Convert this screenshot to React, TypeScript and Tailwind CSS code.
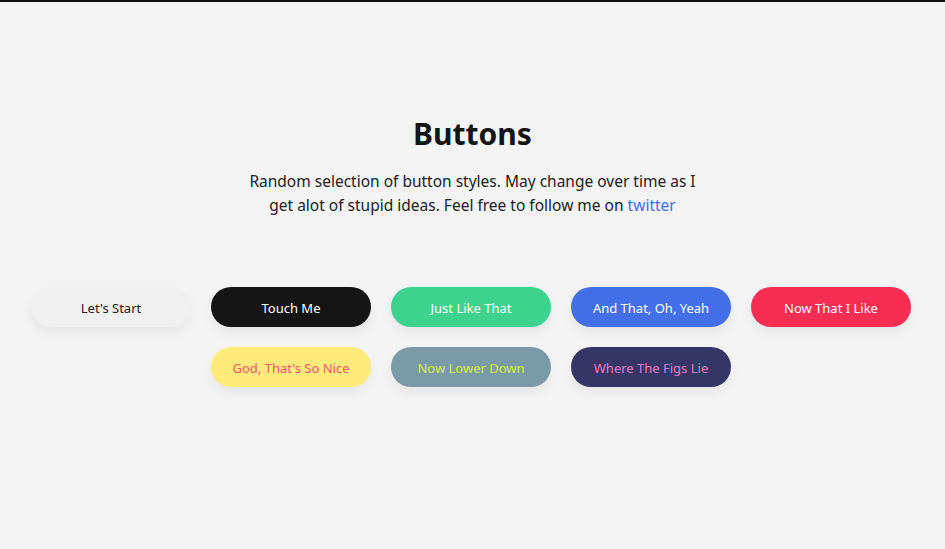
import React from "react";

const buttons = [
  { label: "Let's Start", cls: "bg-[#f0f0f0] text-[#222222] shadow-[0_6px_12px_rgba(0,0,0,0.06)]" },
  { label: "Touch Me", cls: "bg-[#151515] text-white shadow-[0_6px_12px_rgba(0,0,0,0.06)]" },
  { label: "Just Like That", cls: "bg-[#3dd28e] text-white shadow-[0_6px_12px_rgba(0,0,0,0.06)]" },
  { label: "And That, Oh, Yeah", cls: "bg-[#436fe8] text-white shadow-[0_6px_12px_rgba(0,0,0,0.06)]" },
  { label: "Now That I Like", cls: "bg-[#f72d53] text-white shadow-[0_6px_12px_rgba(0,0,0,0.06)]" },
  { label: "God, That's So Nice", cls: "col-start-2 bg-[#feeb7c] text-[#f0586a] shadow-[0_6px_12px_rgba(0,0,0,0.06)]" },
  { label: "Now Lower Down", cls: "bg-[#7a9aa8] text-[#d6f53a] shadow-[0_6px_12px_rgba(0,0,0,0.06)]" },
  { label: "Where The Figs Lie", cls: "bg-[#353566] text-[#f07ac8] shadow-[0_6px_12px_rgba(0,0,0,0.06)]" },
];

export default function App() {
  return (
    <div
      className="min-h-[549px] bg-[#f4f4f4] border-t-2 border-[#111] text-[#111]"
      style={{ fontFamily: '"Segoe UI", "Noto Sans", "Open Sans", sans-serif' }}
    >
      <div className="pt-[108px] flex flex-col items-center">
        <h1 className="text-[30px] font-bold leading-[48px] text-[#141414]">Buttons</h1>
        <p className="mt-[11px] w-[470px] text-center text-[15.5px] leading-[24px] text-[#222]">
          Random selection of button styles. May change over time as I get alot of stupid ideas. Feel free to follow me on{" "}
          <a className="text-[#4a6cf0]" href="#">twitter</a>
        </p>
      </div>
      <div className="mt-[70px] pl-[31px] grid grid-cols-[repeat(5,160px)] gap-[20px]">
        {buttons.map((b) => (
          <button key={b.label} className={`h-[40px] w-[160px] rounded-full text-[13px] leading-[40px] pt-[1px] ${b.cls}`}>
            {b.label}
          </button>
        ))}
      </div>
    </div>
  );
}
